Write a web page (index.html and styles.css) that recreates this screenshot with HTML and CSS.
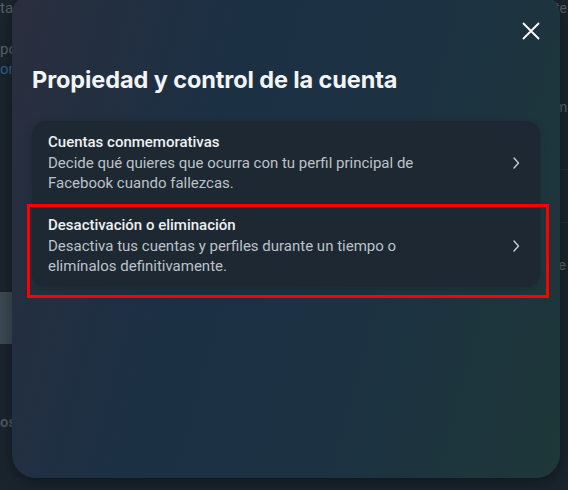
FILE: index.html
```html
<!DOCTYPE html>
<html lang="es">
<head>
  <meta charset="UTF-8">
  <meta name="viewport" content="width=device-width, initial-scale=1.0">
  <title>Propiedad y control de la cuenta</title>
  <link rel="stylesheet" href="styles.css">
</head>
<body>
  <div class="page">
    <div class="page-left">
      <span class="frag top">tad</span>
      <span class="frag">po</span>
      <span class="frag link">or</span>
      <div class="frag-block"></div>
      <span class="frag bold">os</span>
    </div>
    <div class="page-right">
      <span class="frag top">te</span>
      <span class="frag">m</span>
      <div class="rule"></div>
      <div class="rule"></div>
      <span class="frag">le</span>
    </div>
  </div>

  <div class="modal">
    <button class="close-btn" aria-label="Cerrar">
      <svg width="18" height="18" viewBox="0 0 18 18">
        <path d="M1.5 1.5 L16.5 16.5 M16.5 1.5 L1.5 16.5" stroke="#fff" stroke-width="1.8" stroke-linecap="round" fill="none"/>
      </svg>
    </button>
    <h2 class="modal-title">Propiedad y control de la cuenta</h2>

    <div class="options">
      <div class="option">
        <div class="option-text">
          <div class="option-title">Cuentas conmemorativas</div>
          <div class="option-desc">Decide qué quieres que ocurra con tu perfil principal de Facebook cuando fallezcas.</div>
        </div>
        <svg class="chevron" width="8" height="14" viewBox="0 0 8 14">
          <path d="M2 2 L6.5 7 L2 12" stroke="#c9cdd2" stroke-width="1.4" fill="none" stroke-linecap="round" stroke-linejoin="round"/>
        </svg>
      </div>
      <div class="option">
        <div class="option-text">
          <div class="option-title">Desactivación o eliminación</div>
          <div class="option-desc">Desactiva tus cuentas y perfiles durante un tiempo o elimínalos definitivamente.</div>
        </div>
        <svg class="chevron" width="8" height="14" viewBox="0 0 8 14">
          <path d="M2 2 L6.5 7 L2 12" stroke="#c9cdd2" stroke-width="1.4" fill="none" stroke-linecap="round" stroke-linejoin="round"/>
        </svg>
      </div>
    </div>
  </div>

  <div class="highlight"></div>
</body>
</html>
```

FILE: styles.css
```css
html, body {
  margin: 0;
  height: 100%;
  overflow: hidden;
}

body {
  font-family: 'Roboto', 'Inter', sans-serif;
  background: #1a242d;
  color: #fff;
  position: relative;
}

/* page behind the dialog */
.page {
  display: flex;
  justify-content: space-between;
  height: 100%;
}

.page-left, .page-right {
  display: flex;
  flex-direction: column;
  font-size: 15px;
  color: #56606a;
}

.page-left {
  width: 14px;
}

.page-right {
  width: 13px;
  font-size: 14px;
}

.frag {
  white-space: nowrap;
  line-height: 20px;
}

.frag.top {
  margin-top: -2px;
  margin-bottom: 21px;
}

.page-left .frag.link {
  color: #2d5f8a;
}

.frag-block {
  height: 52px;
  background: #3b4852;
  margin-top: 213px;
}

.page-left .frag.bold {
  font-weight: 700;
  margin-top: 68px;
  color: #4a545e;
}

.page-right .frag.top + .frag {
  margin-top: 58px;
}

.rule {
  height: 1px;
  background: #242f39;
  margin-top: 52px;
}

.page-right .rule + .rule + .frag {
  margin-top: 32px;
}

/* dialog */
.modal {
  position: absolute;
  left: 12px;
  top: -8px;
  width: 548px;
  height: 486px;
  box-sizing: border-box;
  padding: 0 20px;
  border-radius: 24px;
  background: linear-gradient(105deg, #2c2e3e 0%, #232f40 14%, #1c3044 35%, #1c3242 65%, #1e3738 100%);
  box-shadow: 0 4px 14px rgba(0, 0, 0, 0.35);
}

.close-btn {
  position: absolute;
  top: 30px;
  right: 20px;
  width: 18px;
  height: 18px;
  padding: 0;
  border: none;
  background: none;
  cursor: pointer;
}

.close-btn svg {
  display: block;
}

.modal-title {
  margin: 74px 0 0;
  font-family: 'Inter', sans-serif;
  font-size: 23.5px;
  line-height: 28px;
  font-weight: 700;
  color: #f2f4f6;
  letter-spacing: -0.1px;
}

.options {
  margin-top: 27px;
  background: #1e2833;
  border-radius: 14px;
  box-shadow: 0 2px 8px rgba(0, 0, 0, 0.15);
}

.option {
  display: flex;
  align-items: center;
  padding: 11px 16px;
}

.option-text {
  flex: 1;
  max-width: 395px;
}

.option-title {
  font-size: 15px;
  line-height: 20px;
  font-weight: 500;
  color: #eef0f2;
  margin-bottom: 1px;
}

.option-desc {
  font-size: 15px;
  line-height: 20px;
  color: #bcc2c8;
}

.chevron {
  margin-left: auto;
  margin-right: 4px;
}

/* annotation drawn over the second option */
.highlight {
  position: absolute;
  left: 27px;
  top: 204px;
  width: 516px;
  height: 88px;
  border: 3px solid #ff0000;
}
```
